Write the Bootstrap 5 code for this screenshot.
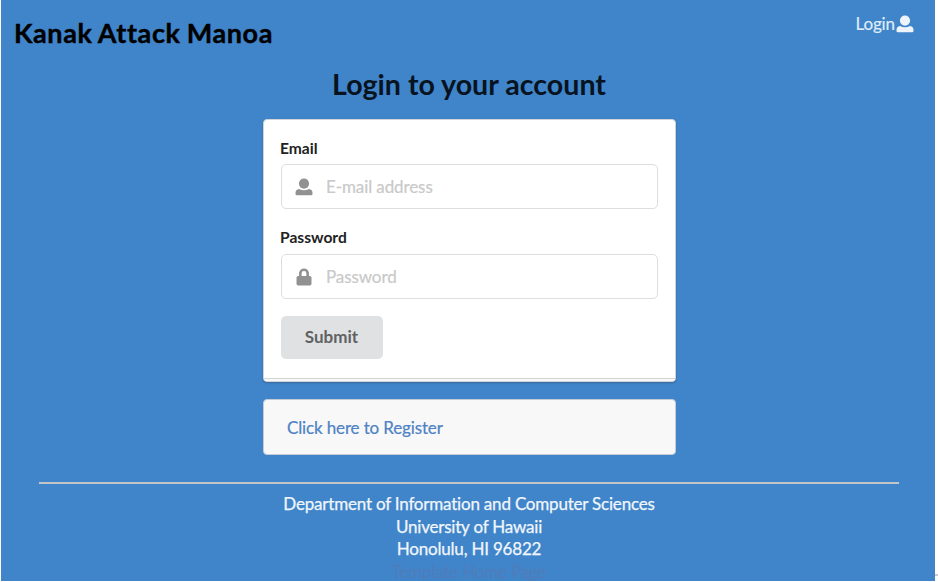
<!DOCTYPE html>
<html lang="en">
<head>
<meta charset="utf-8">
<meta name="viewport" content="width=device-width, initial-scale=1">
<title>Kanak Attack Manoa</title>
<link rel="stylesheet" href="https://cdn.jsdelivr.net/npm/bootstrap@5.3.0/dist/css/bootstrap.min.css">
<style>
body{font-family:Lato,sans-serif;font-size:17px;line-height:22.5px;color:#222;height:582px}
.page{background:#4085ca;width:934px;height:581px;margin-left:1px}
.topbar{height:66px;padding:0 21px 0 13px}
.brand{font-size:27px;font-weight:700;color:#000;line-height:32px;margin-top:17px;white-space:nowrap;letter-spacing:.6px;word-spacing:-1px;-webkit-text-stroke:.4px}
.login-link{color:#dfebf8;margin-top:13px;gap:1px;letter-spacing:-.1px;-webkit-text-stroke:.2px}
.login-link svg{color:#edf4fc}
.login-title{font-size:28.6px;line-height:36px;font-weight:700;color:#07131f;margin:0 0 17px;padding-left:2px}
.login-col{width:413px;margin-left:262px}
.panel{border:1px solid #d0d4d8;border-radius:4px;background:#fff}
.login-panel{height:263px;padding:17px 17px 0;background:#fff;box-shadow:0 1px 2px rgba(34,36,38,.3)}
.form-label{font-size:15.6px;font-weight:700;line-height:22px;margin:0 0 5px -1px}
.field-box{height:45px;border:1px solid #dededf;border-radius:5px;margin-bottom:17px;padding-left:13px}
.field-box + .form-label{margin-bottom:6px}
.field-box svg{color:#919191;flex:none}
.field-box .form-control{font-size:17px;letter-spacing:-.1px;border:0;box-shadow:none;background:transparent;padding:0 0 0 13px;height:100%;color:#333;-webkit-text-stroke:.2px}
.field-box .form-control::placeholder{color:#c9c9c9;opacity:1}
.submit-btn{width:102px;height:43px;background:#e0e1e2;color:#606162;border:0;border-radius:5px;font-size:17px;font-weight:700;padding:0 1px 1px 0}
.panel-foot{margin:19px -17px 0;height:3px;border-top:1px solid #d4d4d5;background:#f8f8f8;border-radius:0 0 3px 3px}
.register-panel{height:56px;background:#f8f8f8;margin-top:17px;padding:2px 0 0 23px;border-color:#c5cbd2}
.register-panel a{color:#4d82c4;letter-spacing:-.14px;-webkit-text-stroke:.2px}
.rule{height:2px;background:#c3c6c9;margin:27px 36px 0 38px}
.foot{color:#f1f6fc;padding:9px 0 0 2px;letter-spacing:-.2px;-webkit-text-stroke:.25px}
.foot a{color:#4f7dbb}
.edge-mark{right:0;bottom:6px;width:3px;height:2px;background:#ccc}
</style>
</head>
<body class="bg-white overflow-hidden position-relative">
<div class="page overflow-hidden">
  <nav class="topbar d-flex justify-content-between align-items-start">
    <a class="brand text-decoration-none" href="#">Kanak Attack Manoa</a>
    <a class="login-link d-flex align-items-center text-decoration-none" href="#">Login
      <svg width="18" height="18" viewBox="0 0 18 18" fill="currentColor" aria-hidden="true"><circle cx="9" cy="5.6" r="5.1"/><path d="M4 11Q9 13.7 14 11Q17.5 11.4 17.5 15V16Q17.5 17.3 16 17.3H2Q.5 17.3 .5 16V15Q.5 11.4 4 11Z"/></svg>
    </a>
  </nav>
  <main>
    <h2 class="login-title text-center">Login to your account</h2>
    <div class="login-col">
      <form class="panel login-panel">
        <label class="form-label d-block" for="email">Email</label>
        <div class="field-box d-flex align-items-center">
          <svg width="18" height="18" viewBox="0 0 18 18" fill="currentColor" aria-hidden="true"><circle cx="9" cy="5.6" r="5.1"/><path d="M4 11Q9 13.7 14 11Q17.5 11.4 17.5 15V16Q17.5 17.3 16 17.3H2Q.5 17.3 .5 16V15Q.5 11.4 4 11Z"/></svg>
          <input class="form-control" id="email" type="email" placeholder="E-mail address">
        </div>
        <label class="form-label d-block" for="password">Password</label>
        <div class="field-box d-flex align-items-center">
          <svg width="18" height="18" viewBox="0 0 18 18" fill="currentColor" aria-hidden="true"><path fill-rule="evenodd" d="M4 8V5.5a5 5 0 0 1 10 0V8h.8q1.7 0 1.7 1.7v6q0 1.7-1.7 1.7H3.2q-1.7 0-1.7-1.7v-6Q1.5 8 3.2 8ZM6.6 8h4.8V5.5a2.4 2.4 0 0 0-4.8 0Z"/></svg>
          <input class="form-control" id="password" type="password" placeholder="Password">
        </div>
        <button class="btn submit-btn d-block" type="button">Submit</button>
        <div class="panel-foot"></div>
      </form>
      <div class="panel register-panel d-flex align-items-center">
        <a class="text-decoration-none" href="#">Click here to Register</a>
      </div>
    </div>
  </main>
  <div class="rule"></div>
  <footer class="foot text-center">
    <div>Department of Information and Computer Sciences</div>
    <div>University of Hawaii</div>
    <div>Honolulu, HI 96822</div>
    <a class="text-decoration-none" href="#">Template Home Page</a>
  </footer>
</div>
<div class="edge-mark position-absolute"></div>
<script src="https://cdn.jsdelivr.net/npm/bootstrap@5.3.0/dist/js/bootstrap.bundle.min.js"></script>
</body>
</html>
